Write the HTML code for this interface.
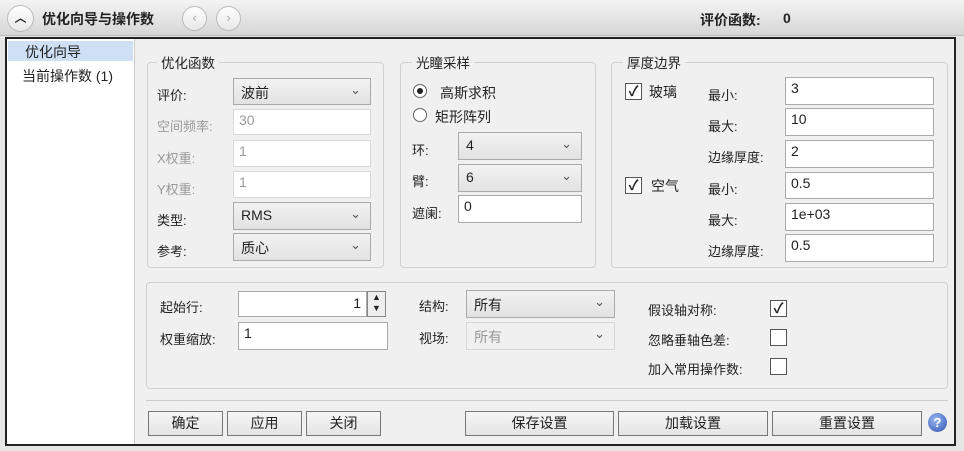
<!DOCTYPE html>
<html><head><meta charset="utf-8"><style>
*{box-sizing:border-box;margin:0;padding:0}
body{width:964px;height:451px;overflow:hidden;background:#e6e6e6;font-family:"Liberation Sans","Noto Sans CJK SC",sans-serif;font-size:13px;color:#222;position:relative}
.a{position:absolute}
.title{left:0;top:0;width:964px;height:36px;background:linear-gradient(#f4f4f4,#d6d6d6);border-bottom:1px solid #bbb}
.circ{border-radius:50%;border:1px solid #bbb;background:linear-gradient(#fff,#e8e8e8)}
.main{left:5px;top:37px;width:951px;height:409px;border:2px solid #222;background:#f0f0f0}
.side{left:7px;top:39px;width:128px;height:405px;background:#fff;border-right:1px solid #ccc}
.grp{border:1px solid #d0d0d0;border-radius:4px}
.gt{background:#f0f0f0;padding:0 4px;font-size:13.5px}
.cb{border:1px solid #a9a9a9;background:linear-gradient(#f2f2f2,#e2e2e2);padding:4px 7px;font-size:14px}
.cb:after{content:"⌄";position:absolute;right:9px;top:3px;font-size:13px;color:#555}
.in{border:1px solid #aaa;background:#fff;padding:2px 5px;font-size:14px}
.dis{border-color:#d8d8d8;color:#999}
.cbdis{border-color:#d8d8d8;background:#f0f0f0;color:#999}
.chk{width:17px;height:17px;border:1px solid #555;background:#fff;font-size:14px;line-height:15px;text-align:center;font-weight:bold}
.btn{border:1px solid #777;background:linear-gradient(#f6f6f6,#e4e4e4);text-align:center;line-height:22px;font-size:14px;height:25px;top:411px}
.g{color:#999}
</style></head><body>
<div class="a title"></div>
<div class="a circ" style="left:7px;top:5px;width:27px;height:27px;text-align:center;font-size:12px;line-height:25px;font-weight:bold">︿</div>
<div class="a" style="left:42px;top:9px;font-weight:bold;font-size:14px">优化向导与操作数</div>
<div class="a circ" style="left:182px;top:6px;width:25px;height:25px;text-align:center;line-height:22px;color:#aaa">‹</div>
<div class="a circ" style="left:216px;top:6px;width:25px;height:25px;text-align:center;line-height:22px;color:#aaa">›</div>
<div class="a" style="left:700px;top:10px;font-weight:bold;font-size:14px">评价函数:</div>
<div class="a" style="left:783px;top:10px;font-weight:bold;font-size:14px">0</div>

<div class="a main"></div>
<div class="a side"></div>
<div class="a" style="left:8px;top:41px;width:125px;height:20px;background:#cfe0f5"></div>
<div class="a" style="left:25px;top:42px;font-size:14px">优化向导</div>
<div class="a" style="left:22px;top:66px;font-size:14px">当前操作数 (1)</div>

<div class="a grp" style="left:147px;top:62px;width:237px;height:206px"></div>
<div class="a gt" style="left:157px;top:52px">优化函数</div>
<div class="a" style="left:157px;top:85px">评价:</div>
<div class="a cb" style="left:233px;top:78px;width:138px;height:27px">波前</div>
<div class="a g" style="left:157px;top:116px">空间频率:</div>
<div class="a in dis" style="left:233px;top:109px;width:138px;height:26px">30</div>
<div class="a g" style="left:157px;top:148px">X权重:</div>
<div class="a in dis" style="left:233px;top:140px;width:138px;height:27px">1</div>
<div class="a g" style="left:157px;top:179px">Y权重:</div>
<div class="a in dis" style="left:233px;top:171px;width:138px;height:27px">1</div>
<div class="a" style="left:157px;top:210px">类型:</div>
<div class="a cb" style="left:233px;top:202px;width:138px;height:28px">RMS</div>
<div class="a" style="left:157px;top:241px">参考:</div>
<div class="a cb" style="left:233px;top:233px;width:138px;height:28px">质心</div>

<div class="a grp" style="left:400px;top:62px;width:196px;height:206px"></div>
<div class="a gt" style="left:412px;top:52px">光瞳采样</div>
<div class="a" style="left:413px;top:84px;width:14px;height:14px;border:1px solid #666;border-radius:50%;background:#fff"></div>
<div class="a" style="left:417px;top:88px;width:6px;height:6px;border-radius:50%;background:#222"></div>
<div class="a" style="left:440px;top:83px;font-size:14px">高斯求积</div>
<div class="a" style="left:413px;top:108px;width:14px;height:14px;border:1px solid #666;border-radius:50%;background:#fff"></div>
<div class="a" style="left:435px;top:107px;font-size:14px">矩形阵列</div>
<div class="a" style="left:412px;top:140px">环:</div>
<div class="a cb" style="left:458px;top:132px;width:124px;height:28px">4</div>
<div class="a" style="left:412px;top:171px">臂:</div>
<div class="a cb" style="left:458px;top:164px;width:124px;height:28px">6</div>
<div class="a" style="left:412px;top:203px">遮阑:</div>
<div class="a in" style="left:458px;top:195px;width:124px;height:28px">0</div>

<div class="a grp" style="left:611px;top:62px;width:337px;height:206px"></div>
<div class="a gt" style="left:623px;top:52px">厚度边界</div>
<div class="a chk" style="left:625px;top:83px">✓</div>
<div class="a" style="left:649px;top:82px;font-size:14px">玻璃</div>
<div class="a chk" style="left:625px;top:177px">✓</div>
<div class="a" style="left:651px;top:176px;font-size:14px">空气</div>
<div class="a" style="left:708px;top:85px">最小:</div>
<div class="a" style="left:708px;top:116px">最大:</div>
<div class="a" style="left:708px;top:147px">边缘厚度:</div>
<div class="a" style="left:708px;top:179px">最小:</div>
<div class="a" style="left:708px;top:210px">最大:</div>
<div class="a" style="left:708px;top:241px">边缘厚度:</div>
<div class="a in" style="left:785px;top:77px;width:149px;height:28px">3</div>
<div class="a in" style="left:785px;top:108px;width:149px;height:28px">10</div>
<div class="a in" style="left:785px;top:140px;width:149px;height:28px">2</div>
<div class="a in" style="left:785px;top:172px;width:149px;height:27px">0.5</div>
<div class="a in" style="left:785px;top:203px;width:149px;height:28px">1e+03</div>
<div class="a in" style="left:785px;top:234px;width:149px;height:28px">0.5</div>

<div class="a grp" style="left:146px;top:282px;width:802px;height:107px"></div>
<div class="a" style="left:160px;top:297px">起始行:</div>
<div class="a in" style="left:238px;top:291px;width:129px;height:26px;text-align:right;padding-top:3px">1</div>
<div class="a" style="left:367px;top:291px;width:19px;height:26px;border:1px solid #888;background:#eee;font-size:9px;line-height:11px;text-align:center">▲<br>▼</div>
<div class="a" style="left:160px;top:329px">权重缩放:</div>
<div class="a in" style="left:238px;top:322px;width:150px;height:28px">1</div>
<div class="a" style="left:419px;top:296px">结构:</div>
<div class="a cb" style="left:466px;top:290px;width:149px;height:28px">所有</div>
<div class="a" style="left:419px;top:328px">视场:</div>
<div class="a cb cbdis" style="left:466px;top:322px;width:149px;height:28px">所有</div>
<div class="a" style="left:648px;top:300px">假设轴对称:</div>
<div class="a" style="left:648px;top:330px">忽略垂轴色差:</div>
<div class="a" style="left:648px;top:359px">加入常用操作数:</div>
<div class="a chk" style="left:770px;top:300px">✓</div>
<div class="a chk" style="left:770px;top:329px"></div>
<div class="a chk" style="left:770px;top:358px"></div>

<div class="a" style="left:146px;top:400px;width:802px;height:1px;background:#ccc"></div>
<div class="a btn" style="left:148px;width:75px">确定</div>
<div class="a btn" style="left:227px;width:75px">应用</div>
<div class="a btn" style="left:306px;width:75px">关闭</div>
<div class="a btn" style="left:465px;width:149px">保存设置</div>
<div class="a btn" style="left:618px;width:150px">加载设置</div>
<div class="a btn" style="left:772px;width:150px">重置设置</div>
<div class="a" style="left:928px;top:413px;width:19px;height:19px;border-radius:50%;background:radial-gradient(circle at 40% 35%,#9ab8f0,#2c52b0);color:#fff;font-weight:bold;font-size:13px;text-align:center;line-height:19px">?</div>
</body></html>
